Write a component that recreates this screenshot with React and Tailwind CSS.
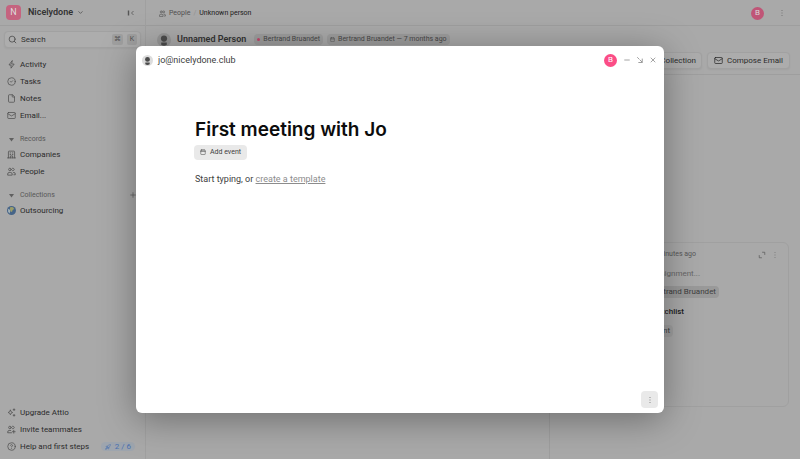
import React from "react";
import {
  CircleCheck,
  File,
  Mail,
  CircleHelp,
  Search,
  ChevronDown,
  Plus,
  Rocket,
  Calendar,
  Minus,
  X,
} from "lucide-react";

// small outline icons, all on a 16px grid
const outline = { viewBox: "0 0 16 16", fill: "none", stroke: "currentColor", strokeWidth: 1.4, strokeLinecap: "round", strokeLinejoin: "round" };

const BoltIcon = ({ size = 9, className }) => (
  <svg width={size} height={size} className={className} {...outline}>
    <path d="M9 1.5L3.5 8.8h3.700V14.500l5.500-7.300H9z" />
  </svg>
);

const BuildingIcon = ({ size = 9, className }) => (
  <svg width={size} height={size} className={className} {...outline}>
    <path d="M2.5 14V3.2q0-1.2 1.2-1.2h8.6q1.2 0 1.2 1.2V14M1 14h14M6 14v-3.5h4V14M5.5 5.2h1M9.5 5.2h1M5.5 8h1M9.5 8h1" />
  </svg>
);

const PeopleIcon = ({ size = 9, className }) => (
  <svg width={size} height={size} className={className} {...outline}>
    <circle cx="5.2" cy="4.4" r="2.3" />
    <path d="M9.6 2.3a2.3 2.3 0 1 1 0 4.2M1.2 13.8v-1.4q0-2.6 2.6-2.6h2.8q2.6 0 2.6 2.6v1.4zM11.4 9.8h.8q2.6 0 2.6 2.6v1.4h-2.6" />
  </svg>
);

const InviteIcon = ({ size = 9, className }) => (
  <svg width={size} height={size} className={className} {...outline}>
    <circle cx="5.2" cy="4.4" r="2.3" />
    <path d="M9.6 2.3a2.3 2.3 0 1 1 0 4.2M8 13.8H1.2v-1.4q0-2.6 2.6-2.6h2.8M12 9.4v5M9.5 11.9h5" />
  </svg>
);

const SparkleIcon = ({ size = 9, className }) => (
  <svg width={size} height={size} className={className} {...outline}>
    <path d="M6 4q.6 3.400 4 4Q6.600 8.600 6 12Q5.400 8.600 2 8Q5.400 7.400 6 4z" />
    <path d="M12.500 1.500v3M11 3h3M12.500 11.500v3M11 13h3" />
  </svg>
);

const DockIcon = () => (
  <svg width="8" height="8" {...outline}>
    <path d="M3 3l3 3M8 8l4 4M12.500 6v7H5.500" />
  </svg>
);

const ExpandIcon = () => (
  <svg width="8" height="8" {...outline}>
    <path d="M9 2.500h4.500V7M2.500 9v4.500H7" />
  </svg>
);

const DotsIcon = () => (
  <svg width="8" height="8" viewBox="0 0 8 8" fill="currentColor">
    <path d="M3.500 1h1v1h-1zM3.500 3.500h1v1h-1zM3.500 6h1v1h-1z" />
  </svg>
);

const CollapseIcon = () => (
  <svg width="8" height="8" viewBox="0 0 8 8" fill="none" stroke="#555555">
    <path d="M1.500 1.500v5" strokeWidth="1.400" />
    <path d="M6.500 2L4.500 4l2 2" strokeWidth="0.800" />
  </svg>
);

const Globe = () => (
  <svg width="9" height="9" viewBox="0 0 8 8" className="shrink-0">
    <circle cx="4" cy="4" r="4" fill="#456488" />
    <path d="M3 .8l2.400.200 1 1.600-1.400 1-.6 1.800L3 4.600 2.600 2.400z" fill="#9c9e68" />
    <path d="M1 2.400l1.600 1 .2 1.800L2.200 6.600 1 5.200z" fill="#a3b2b8" />
  </svg>
);

// round placeholder picture of a person
const PersonAvatar = ({ size, ring, ink }) => (
  <svg width={size} height={size} viewBox="0 0 14 14" className="shrink-0">
    <circle cx="7" cy="7" r="7" fill={ring} />
    <circle cx="7" cy="5.600" r="3.100" fill={ink} />
    <path d="M4.200 9.600h5.600v2.200a5 5 0 0 1-5.600 0z" fill={ink} />
  </svg>
);

const mainLinks = [
  { label: "Activity", icon: BoltIcon },
  { label: "Tasks", icon: CircleCheck },
  { label: "Notes", icon: File },
  { label: "Email...", icon: Mail },
];

const recordLinks = [
  { label: "Companies", icon: BuildingIcon },
  { label: "People", icon: PeopleIcon },
];

const footerLinks = [
  { label: "Upgrade Attio", icon: SparkleIcon },
  { label: "Invite teammates", icon: InviteIcon },
  { label: "Help and first steps", icon: CircleHelp, progress: "2 / 6" },
];

const NavLink = ({ label, icon: Icon, progress }) => (
  <a href="#" className="flex h-[17px] items-center gap-1 pl-[7px] pr-[10px] text-[8px] text-[#2b2b2b]">
    {Icon ? <Icon size={9} className="shrink-0 text-[#505050]" /> : <Globe />}
    <span className="whitespace-nowrap">{label}</span>
    {progress && (
      <span className="ml-auto flex h-[9px] items-center gap-1 rounded-full bg-[#9ea5ae] px-1 whitespace-nowrap text-[#4a70b0]">
        <Rocket size={6} />
        {progress}
      </span>
    )}
  </a>
);

const SectionTitle = ({ label, children }) => (
  <div className="mt-2 flex h-[14px] items-center gap-1 pl-[7px] text-[7px] text-[#585858]">
    <svg width="9" height="9" viewBox="0 0 9 9">
      <path d="M2 3h5L4.500 6.500z" fill="#606060" />
    </svg>
    <span>{label}</span>
    {children}
  </div>
);

const Sidebar = () => (
  <aside className="flex w-[146px] shrink-0 flex-col border-r border-[#a0a0a0]">
    <div className="flex h-[26px] items-center border-b border-[#9e9e9e] pl-[6px] pr-[10px]">
      <span className="flex size-[15px] items-center justify-center rounded bg-[#c5637f] text-[9px] text-[#dddddd]">N</span>
      <button className="ml-[7px] flex items-center gap-1 text-[9px] font-semibold text-[#333333]">
        Nicelydone
        <ChevronDown size={7} />
      </button>
      <button aria-label="Collapse sidebar" className="ml-auto">
        <CollapseIcon />
      </button>
    </div>

    <label className="mx-1 mt-[5px] flex h-[17px] items-center gap-1 rounded border border-[#a1a1a1] bg-[#adadad] pl-[3px] pr-[3px] shadow-xs">
      <Search size={9} className="shrink-0 text-[#444444]" />
      <input
        type="text"
        aria-label="Search"
        placeholder="Search"
        className="w-0 flex-1 bg-transparent text-[8px] outline-none placeholder:text-[#333333]"
      />
      <kbd className="flex h-[11px] w-[11px] items-center justify-center rounded-xs bg-[#9f9f9f] font-[Inter,'DejaVu_Sans',sans-serif] text-[7px] text-[#555555]">⌘</kbd>
      <kbd className="flex h-[11px] w-[10px] items-center justify-center rounded-xs bg-[#9f9f9f] font-[Roboto,sans-serif] text-[7px] text-[#555555]">K</kbd>
    </label>

    <nav className="flex flex-1 flex-col pt-2">
      {mainLinks.map((link) => (
        <NavLink key={link.label} {...link} />
      ))}

      <SectionTitle label="Records" />
      {recordLinks.map((link) => (
        <NavLink key={link.label} {...link} />
      ))}

      <SectionTitle label="Collections">
        <button aria-label="Add collection" className="ml-auto mr-2">
          <Plus size={8} />
        </button>
      </SectionTitle>
      <NavLink label="Outsourcing" />

      <div className="mt-auto pb-1">
        {footerLinks.map((link) => (
          <NavLink key={link.label} {...link} />
        ))}
      </div>
    </nav>
  </aside>
);

const ActivityCard = () => (
  <article className="mr-[11px] ml-3 mt-[167px] flex h-[165px] flex-col rounded-md border border-[#a0a0a0] px-3 text-[8px]">
    <div className="flex h-[23px] items-center text-[7px] text-[#585858]">
      <span className="w-[121px] text-right">Created 2 minutes ago</span>
      <button aria-label="Expand" className="ml-auto mr-[5px]">
        <ExpandIcon />
      </button>
      <button aria-label="Card options" className="mr-[-3px] text-[#808080]">
        <DotsIcon />
      </button>
    </div>
    <div className="flex h-[15px] w-[125px] items-center justify-end text-[#666666]">Add assignment...</div>
    <div className="flex h-[22px] w-[144px] items-center justify-end">
      <span className="rounded-sm bg-[#999999] px-[3px] text-[#404040]">Bertrand Bruandet</span>
    </div>
    <div className="flex h-[18px] w-[109px] items-center justify-end font-medium text-[#202020]">Watchlist</div>
    <div className="flex h-[20px] w-[98px] items-center justify-end">
      <span className="rounded-sm bg-[#a0a0a0] px-[3px] text-[#404040]">Client</span>
    </div>
  </article>
);

const Main = () => (
  <main className="flex min-w-0 flex-1 flex-col">
    <header className="flex h-[26px] items-center border-b border-[#9e9e9e] pl-[13px] pr-[14px] pt-px text-[7px]">
      <a href="#" className="flex items-center gap-[3px] text-[#505050]">
        <PeopleIcon size={7} />
        People
      </a>
      <span className="mx-[3px] text-[#929292]">/</span>
      <span className="text-[#202020]">Unknown person</span>
      <span className="ml-auto flex size-[13px] items-center justify-center rounded-full bg-[#c05577] text-[8px] text-[#d8d8d8]">B</span>
      <button aria-label="More" className="ml-[14px] text-[#777777]">
        <DotsIcon />
      </button>
    </header>

    <section className="h-[49px] border-b border-[#9e9e9e] pl-[11px] pr-[10px] pt-[6px]">
      <div className="flex h-[15px] items-center text-[7px] text-[#484848]">
        <PersonAvatar size={14} ring="#979797" ink="#4c4c4c" />
        <h1 className="ml-[6px] text-[9px] font-semibold text-[#333333]">Unnamed Person</h1>
        <span className="ml-2 flex h-[11px] items-center gap-[3px] rounded-sm bg-[#9d9d9d] px-[3px]">
          <span className="size-[3px] rounded-full bg-[#c2476c]"></span>
          Bertrand Bruandet
        </span>
        <span className="ml-1 flex h-[11px] items-center gap-[3px] rounded-sm bg-[#9d9d9d] px-[3px]">
          <Calendar size={5} />
          Bertrand Bruandet — 7 months ago
        </span>
      </div>
      <div className="mt-[5px] flex justify-end gap-[5px] text-[8px] text-[#2b2b2b]">
        <button className="h-[17px] rounded border border-[#a1a1a1] bg-[#acacac] px-[5px] shadow-xs">Add to Collection</button>
        <button className="flex h-[17px] items-center gap-1 rounded border border-[#a1a1a1] bg-[#acacac] px-[6px] shadow-xs">
          <Mail size={9} />
          Compose Email
        </button>
      </div>
    </section>

    <div className="flex flex-1">
      <div className="flex-1"></div>
      <div className="w-[251px] border-l border-[#9e9e9e]">
        <ActivityCard />
      </div>
    </div>
  </main>
);

const NoteModal = () => (
  <div
    role="dialog"
    aria-label="Note"
    className="absolute inset-x-[17%] top-[10%] bottom-[10%] flex flex-col rounded-md bg-white shadow-[0_6px_36px_rgba(0,0,0,0.36)]"
  >
    <div className="flex h-[29px] items-center pl-[6px] pr-[7px]">
      <PersonAvatar size={11} ring="#dddddd" ink="#4b4b4b" />
      <span className="ml-[5px] text-[9px] text-[#404040]">jo@nicelydone.club</span>
      <span className="ml-auto flex size-[13px] items-center justify-center rounded-full bg-[#fb4d86] text-[8px] text-white">B</span>
      <div className="ml-[6px] flex items-center gap-[5px] text-[#777777]">
        <button aria-label="Minimize">
          <Minus size={8} />
        </button>
        <button aria-label="Dock">
          <DockIcon />
        </button>
        <button aria-label="Close">
          <X size={8} />
        </button>
      </div>
    </div>

    <div className="flex-1 px-[59px] pt-[41px]">
      <h2 className="font-[Inter,sans-serif] text-[19px] leading-[28px] font-semibold text-[#0c0c0c]">First meeting with Jo</h2>
      <button className="mt-px -ml-px flex h-[15px] items-center gap-1 rounded bg-[#e9e9e9] px-[6px] text-[7px] text-[#404040]">
        <Calendar size={6} />
        Add event
      </button>
      <p className="mt-3 text-[9px] leading-[14px] text-[#404040]">
        Start typing, or <a href="#" className="text-[#8c8c8c] underline">create a template</a>
      </p>
    </div>

    <div className="flex justify-end px-[6px] pb-[5px]">
      <button aria-label="Note options" className="flex size-[17px] items-center justify-center rounded bg-[#e9e9e9] text-[#888888]">
        <DotsIcon />
      </button>
    </div>
  </div>
);

export default function App() {
  return (
    <div className="relative flex min-h-screen overflow-hidden bg-[#a9a9a9] font-[Roboto,sans-serif]">
      <Sidebar />
      <Main />
      <NoteModal />
    </div>
  );
}
